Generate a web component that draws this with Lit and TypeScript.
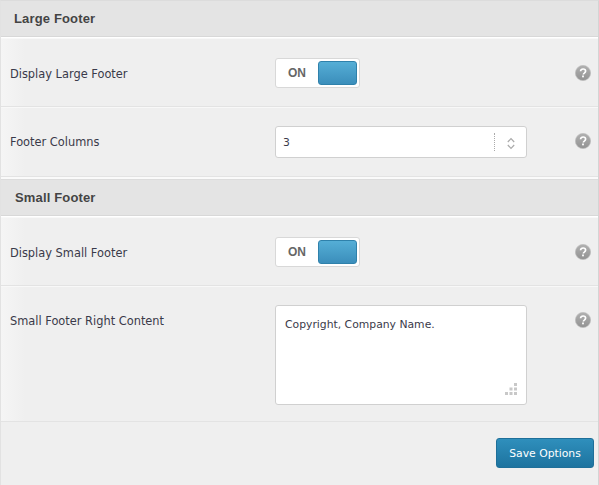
import { LitElement, html, css } from 'lit';
import { customElement } from 'lit/decorators.js';

const helpIcon = html`
  <svg class="help" width="16" height="16" viewBox="0 0 16 16">
    <defs>
      <linearGradient id="hg" x1="0" y1="0" x2="0" y2="1">
        <stop offset="0" stop-color="#b0b0b0" />
        <stop offset="1" stop-color="#929292" />
      </linearGradient>
    </defs>
    <circle cx="8" cy="8" r="7.6" fill="url(#hg)" stroke="#bcbcbc" stroke-width="0.7" />
    <path d="M5.6 6.2c0-1.4 1-2.2 2.5-2.2s2.5.8 2.5 2.1c0 1-.6 1.5-1.3 2-.6.4-.9.7-.9 1.4" fill="none" stroke="#fff" stroke-width="1.7" />
    <rect x="7.1" y="10.5" width="1.8" height="1.8" fill="#fff" />
  </svg>
`;

@customElement('app-root')
export class AppRoot extends LitElement {
  static styles = css`
    :host {
      display: block;
      width: 599px;
      height: 485px;
      overflow: hidden;
      font-family: 'DejaVu Sans', sans-serif;
      font-size: 11.4px;
      color: #3a3a4a;
    }
    .panel {
      height: 485px;
      box-sizing: border-box;
      background: #efefef;
      border-left: 1px solid #e2e2e2;
      border-right: 1px solid #d4d4d4;
      border-top: 1px solid #dcdcdc;
    }
    .head {
      height: 36px;
      box-sizing: border-box;
      padding-left: 13px;
      background: #e4e4e4;
      border-bottom: 1px solid #d8d8d8;
      box-shadow: 0 1px 0 #fff;
      display: flex;
      align-items: center;
      font-family: 'Liberation Sans', sans-serif;
      font-size: 13px;
      letter-spacing: 0.15px;
      font-weight: bold;
      color: #444;
      margin-bottom: 1px;
    }
    .head.second {
      padding-left: 14px;
      border-top: 1px solid #dcdcdc;
      height: 37px;
      margin-top: 2px;
      margin-bottom: 1px;
      box-shadow: 0 1px 0 #fff, 0 -2px 0 #fafafa;
    }
    .row {
      display: grid;
      grid-template-columns: 265px 252px 1fr;
      padding: 0 0 0 9px;
      box-sizing: border-box;
      align-items: center;
      border-top: 1px solid #f8f8f8;
      border-bottom: 1px solid #e3e3e3;
      background: linear-gradient(to right, #f5f5f5, #efefef 24px);
    }
    .row.r1 { height: 69px; padding-top: 1px; }
    .row.r2 { height: 70px; }
    .row.r3 { height: 69px; padding-top: 1px; }
    .row.r4 { height: 136px; align-items: start; padding-top: 18px; }
    .row .label { line-height: 16px; white-space: nowrap; }
    .row.r1 .label, .row.r3 .label { margin-top: 1px; }
    .row.r2 .label { margin-top: -1px; }
    .row.r4 .label { margin-top: 8px; }
    .help { display: block; margin-left: 48px; }
    .row.r2 .help { margin-top: -2px; }
    .row.r4 .help { margin-top: 7px; }
    .toggle {
      width: 85px;
      height: 30px;
      box-sizing: border-box;
      background: #fff;
      border: 1px solid #d8d8d8;
      border-radius: 3px;
      display: flex;
      align-items: center;
      justify-content: space-between;
      padding: 0 2px 0 12px;
      font-family: 'Liberation Sans', sans-serif;
      font-size: 12px;
      font-weight: bold;
      color: #666;
    }
    .toggle .knob {
      width: 39px;
      height: 24px;
      box-sizing: border-box;
      border: 1px solid #2f81ab;
      border-radius: 3px;
      background: linear-gradient(to bottom, #55aed6, #3b8ebb);
    }
    .select {
      height: 32px;
      box-sizing: border-box;
      background: #fff;
      border: 1px solid #d0d0d0;
      border-radius: 3px;
      display: flex;
      align-items: center;
      padding-left: 7px;
      font-size: 10.8px;
    }
    .select .value { flex: 1; }
    .select .arrows {
      width: 32px;
      height: 18px;
      border-left: 1px dotted #aaa;
      display: flex;
      align-items: center;
      justify-content: center;
      padding-top: 2px;
      box-sizing: border-box;
    }
    .textarea {
      position: relative;
      height: 100px;
      box-sizing: border-box;
      background: #fff;
      border: 1px solid #d0d0d0;
      border-radius: 3px;
      padding: 11px 9px;
      font-size: 10.8px;
      line-height: 16px;
    }
    .grip { position: absolute; right: 9px; bottom: 9px; display: block; }
    .foot {
      display: flex;
      justify-content: flex-end;
      padding: 16px 4px 0 0;
    }
    .save {
      width: 98px;
      height: 30px;
      box-sizing: border-box;
      border: 1px solid #1e6f99;
      border-radius: 3px;
      background: linear-gradient(to bottom, #2f8fbc, #1d739f);
      color: #fff;
      font: 10.8px 'DejaVu Sans', sans-serif;
      padding: 0;
    }
  `;

  render() {
    return html`
      <div class="panel">
        <div class="head">Large Footer</div>
        <div class="row r1">
          <div class="label">Display Large Footer</div>
          <div class="toggle"><span>ON</span><span class="knob"></span></div>
          ${helpIcon}
        </div>
        <div class="row r2">
          <div class="label">Footer Columns</div>
          <div class="select">
            <span class="value">3</span>
            <span class="arrows">
              <svg width="8" height="13" viewBox="0 0 8 13" fill="none" stroke="#aaa" stroke-width="1.2">
                <path d="M.8 5 4 1.6 7.2 5M.8 8 4 11.4 7.2 8" />
              </svg>
            </span>
          </div>
          ${helpIcon}
        </div>
        <div class="head second">Small Footer</div>
        <div class="row r3">
          <div class="label">Display Small Footer</div>
          <div class="toggle"><span>ON</span><span class="knob"></span></div>
          ${helpIcon}
        </div>
        <div class="row r4">
          <div class="label">Small Footer Right Content</div>
          <div class="textarea">
            Copyright, Company Name.
            <svg class="grip" width="12" height="12" viewBox="0 0 12 12" fill="#c8c8c8">
              <rect x="9" y="0" width="3" height="3" />
              <rect x="4.5" y="4.5" width="3" height="3" />
              <rect x="9" y="4.5" width="3" height="3" />
              <rect x="0" y="9" width="3" height="3" />
              <rect x="4.5" y="9" width="3" height="3" />
              <rect x="9" y="9" width="3" height="3" />
            </svg>
          </div>
          ${helpIcon}
        </div>
        <div class="foot"><button class="save">Save Options</button></div>
      </div>
    `;
  }
}
